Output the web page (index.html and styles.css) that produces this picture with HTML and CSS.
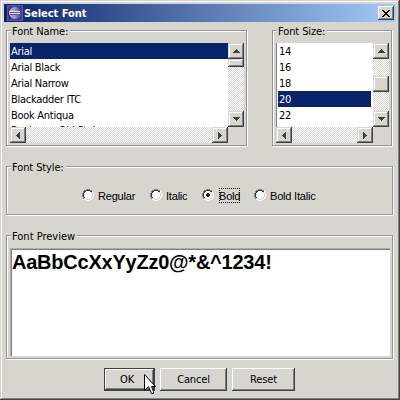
FILE: index.html
```html
<!DOCTYPE html>
<html lang="en">
<head>
<meta charset="utf-8">
<title>Select Font</title>
<link rel="stylesheet" href="styles.css">
</head>
<body>
<svg class="defs" width="0" height="0" aria-hidden="true">
  <symbol id="up" viewBox="0 0 7 4"><path d="M3 0h1v1h1v1h1v1h1v1H0V3h1V2h1V1h1z"/></symbol>
  <symbol id="down" viewBox="0 0 7 4"><path d="M0 0h7v1H6v1H5v1H4v1H3V3H2V2H1V1H0z"/></symbol>
  <symbol id="left" viewBox="0 0 4 7"><path d="M4 0v7H3V6H2V5H1V4H0V3h1V2h1V1h1V0z"/></symbol>
  <symbol id="right" viewBox="0 0 4 7"><path d="M0 0v7h1V6h1V5h1V4h1V3H3V2H2V1H1V0z"/></symbol>
  <symbol id="radio" viewBox="0 0 12 12">
    <path fill="#fff" d="M4 1h4v1h2v2h1v4h-1v2H8v1H4v-1H2V8H1V4h1V2h2z"/>
    <path fill="#808080" d="M4 0h4v1H4zM2 1h2v1H2zM8 1h2v1H8zM1 2h1v2H1zM0 4h1v4H0zM1 8h1v2H1z"/>
    <path fill="#404040" d="M4 1h4v1H4zM2 2h2v1H2zM8 2h2v1H8zM2 3h1v1H2zM1 4h1v4H1zM2 8h1v1H2z"/>
    <path fill="#fff" d="M10 2h1v2h-1zM11 4h1v4h-1zM10 8h1v2h-1zM8 10h2v1H8zM4 11h4v1H4zM2 10h2v1H2z"/>
    <path fill="#d6d3ce" d="M9 3h1v1H9zM10 4h1v4h-1zM9 8h1v1H9zM8 9h2v1H8zM4 10h4v1H4zM2 9h2v1H2z"/>
  </symbol>
</svg>
<main class="window">
  <header class="titlebar">
    <svg class="logo" width="16" height="16" viewBox="0 0 16 16">
      <defs><linearGradient id="orb" x2="1"><stop stop-color="#b9b4dc"/><stop offset=".5" stop-color="#9993c9"/><stop offset="1" stop-color="#4a4088"/></linearGradient></defs>
      <path fill="#5f54ac" d="M0 0h16v16H0z"/><path fill="#463b94" d="M1 1h14v14H1z"/>
      <circle cx="8" cy="8" r="6" fill="url(#orb)"/>
      <path fill="none" stroke="#282063" d="M4 3A6 6 0 0 0 4 13"/>
      <path fill="#5a5298" d="M3 7h11v1H3zM3 9h11v1H3z"/><path fill="#e8e5fa" d="M2 6h11v1H2zM3 8h10v1H3z"/>
    </svg>
    <h1>Select Font</h1>
    <button class="close" aria-label="Close"><svg width="8" height="7" viewBox="0 0 8 7"><path d="M0 0h2v1h1v1h2V1h1V0h2v1H7v1H6v1H5v1h1v1h1v1h1v1H6V6H5V5H3v1H2v1H0V6h1V5h1V4h1V3H2V2H1V1H0z"/></svg></button>
  </header>
  <div class="top">
    <section class="group names">
      <h2>Font Name:</h2>
      <div class="pane">
        <ul class="list">
          <li class="selected">Arial</li><li>Arial Black</li><li>Arial Narrow</li><li>Blackadder ITC</li><li>Book Antiqua</li><li class="partial">Bookman Old Style</li>
        </ul>
        <div class="track vertical"><b class="knob"><svg width="7" height="4"><use href="#up"/></svg></b><b class="thumb small"></b><b class="knob last"><svg width="7" height="4"><use href="#down"/></svg></b></div>
        <div class="track horizontal"><b class="knob"><svg width="4" height="7"><use href="#left"/></svg></b><b class="knob last"><svg width="4" height="7"><use href="#right"/></svg></b></div>
      </div>
    </section>
    <section class="group sizes">
      <h2>Font Size:</h2>
      <div class="pane">
        <ul class="list">
          <li>14</li><li>16</li><li>18</li><li class="selected">20</li><li>22</li>
        </ul>
        <div class="track vertical"><b class="knob"><svg width="7" height="4"><use href="#up"/></svg></b><b class="thumb middle"></b><b class="knob last"><svg width="7" height="4"><use href="#down"/></svg></b></div>
        <div class="track horizontal"><b class="knob"><svg width="4" height="7"><use href="#left"/></svg></b><b class="knob last"><svg width="4" height="7"><use href="#right"/></svg></b></div>
      </div>
    </section>
  </div>
  <section class="group style">
    <h2>Font Style:</h2>
    <div class="options">
      <label class="regular"><svg width="12" height="12"><use href="#radio"/></svg><span>Regular</span></label>
      <label class="italic"><svg width="12" height="12"><use href="#radio"/></svg><span>Italic</span></label>
      <label class="bold"><svg width="12" height="12"><use href="#radio"/><path fill="#202020" d="M5 4h2v1h1v2H7v1H5V7H4V5h1z"/></svg><span class="focus">Bold</span></label>
      <label class="both"><svg width="12" height="12"><use href="#radio"/></svg><span>Bold Italic</span></label>
    </div>
  </section>
  <section class="group preview">
    <h2 class="wide">Font Preview</h2>
    <div class="sample"><span>AaBbCcXxYyZz0@*&amp;^1234!</span></div>
  </section>
  <footer class="actions">
    <button class="ok">OK</button><button class="cancel">Cancel</button><button class="reset">Reset</button>
  </footer>
  <svg class="cursor" width="12" height="21" viewBox="0 0 12 21"><path fill="#fff" stroke="#000" d="M.5.5v16l4-4 3 7h2v-2l-2-5h4z"/></svg>
</main>
</body>
</html>
```
FILE: styles.css
```css
* { box-sizing: border-box; }
body { margin: 0; font: 11px/16px "DejaVu Sans Condensed", "DejaVu Sans", sans-serif; font-stretch: condensed; color: #000; }
h1, h2, ul { margin: 0; padding: 0; font: inherit; }
.defs { position: absolute; }
.window {
  position: relative; width: 400px; height: 400px; padding: 4px; overflow: hidden;
  background: #d6d6ce;
  box-shadow: inset -1px -1px #404040, inset 1px 1px #d6d3ce, inset -2px -2px #808080, inset 2px 2px #fff;
}
.titlebar { display: flex; align-items: center; height: 18px; padding: 0 2px 0 3px; background: linear-gradient(90deg, #08246b, #a5cbf7); }
.titlebar h1 { padding: 1px 0 0 1px; color: #fff; font-weight: bold; font-size: 11px; letter-spacing: -.05px; white-space: nowrap; }
button { font: inherit; color: #000; background: #d6d6ce; border: 0; padding: 0; display: flex; align-items: center; justify-content: center; box-shadow: inset -1px -1px #404040, inset 1px 1px #fff, inset -2px -2px #808080; }
.close { width: 16px; height: 14px; margin-left: auto; padding-right: 1px; }
.top { display: flex; gap: 24px; margin: 8px 0 0 2px; }
.group { position: relative; border: 1px solid #949494; box-shadow: 1px 1px #fff, inset 1px 1px #fff; }
.group h2 { position: absolute; left: 4px; top: -7px; height: 16px; padding: 0 2px 0 1px; background: #d6d6ce; letter-spacing: -.1px; white-space: nowrap; }
.group .wide { letter-spacing: 0; }
.names { width: 241px; height: 116px; padding: 12px 0 0 3px; }
.sizes { width: 120px; height: 116px; padding: 12px 0 0 3px; margin-left: 1px; }
.pane { display: grid; grid-template: 84px 16px / 218px 16px; }
.sizes .pane { grid-template-columns: 97px 16px; }
.list { list-style: none; overflow: hidden; background: #fff; }
.sizes .list { border-left: 1px solid #808080; padding: 0 2px 0 1px; }
.list li { height: 16px; padding-left: 1px; line-height: 18px; letter-spacing: -.28px; white-space: nowrap; }
.list .partial { line-height: 16px; }
.list .selected { background: #08246b; color: #fff; }
.track { display: flex; background: repeating-conic-gradient(#fff 0 25%, #d6d6ce 0 50%) 0 0 / 2px 2px; }
.vertical { flex-direction: column; }
.knob, .thumb { flex: none; width: 16px; height: 16px; background: #d6d6ce; box-shadow: inset -1px -1px #404040, inset 1px 1px #d6d6ce, inset -2px -2px #808080, inset 2px 2px #fff; }
.knob { display: flex; align-items: center; justify-content: center; }
.knob svg { fill: #404040; }
.vertical .last { margin-top: auto; }
.horizontal .last { margin-left: auto; }
.small { height: 8px; }
.middle { margin-top: 17px; }
.style { width: 387px; height: 49px; margin: 20px 0 0 2px; }
.options { display: flex; padding: 20px 0 0 75px; }
label { display: flex; align-items: center; height: 16px; white-space: nowrap; font-family: "Liberation Sans", sans-serif; letter-spacing: -.2px; }
label svg { flex: none; margin-right: 4px; }
label span { padding-top: 1px; }
.regular { width: 68px; }
.italic, .bold { width: 52px; }
.bold svg { margin-right: 5px; }
.focus { width: 21px; height: 15px; line-height: 15px; outline: 1px dotted #000; outline-offset: -1px; }
.preview { width: 387px; height: 124px; margin: 20px 0 0 2px; padding: 12px 0 0 3px; }
.sample { width: 380px; height: 108px; padding: 1px 0 0 1px; background: #fff; border: solid #adadad; border-width: 1px 0 0 1px; box-shadow: inset 1px 1px #808080; overflow: hidden; }
.sample span { display: block; font: bold 20px/24px "Liberation Sans", sans-serif; letter-spacing: -.23px; white-space: nowrap; }
.actions { display: flex; gap: 5px; margin: 9px 0 0 100px; }
.actions button { width: 63px; height: 23px; letter-spacing: -.15px; }
.actions .ok { width: 51px; padding-right: 5px; box-shadow: inset 0 0 0 1px #404040, inset -2px -2px #404040, inset 2px 2px #fff, inset -3px -3px #808080; }
.actions .cancel { width: 67px; }
.cursor { position: absolute; left: 144px; top: 374px; }
```
